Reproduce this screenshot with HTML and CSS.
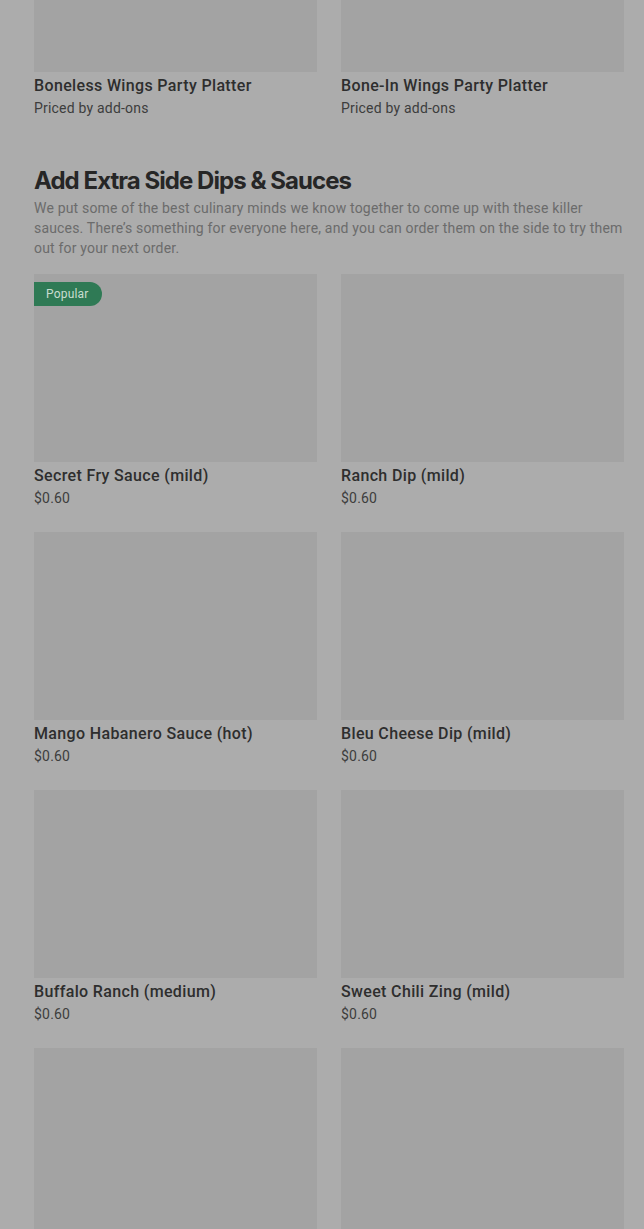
FILE: index.html
```html
<!DOCTYPE html>
<html lang="en">
<head>
<meta charset="utf-8">
<title>Menu</title>
<link rel="stylesheet" href="styles.css">
</head>
<body>
<main class="page">
  <section class="grid grid-top">
    <article class="card">
      <div class="thumb"></div>
      <h3 class="name">Boneless Wings Party Platter</h3>
      <p class="price">Priced by add-ons</p>
    </article>
    <article class="card">
      <div class="thumb"></div>
      <h3 class="name">Bone-In Wings Party Platter</h3>
      <p class="price">Priced by add-ons</p>
    </article>
  </section>

  <section class="category">
    <h2 class="cat-title">Add Extra Side Dips &amp; Sauces</h2>
    <p class="cat-desc">We put some of the best culinary minds we know together to come up with these killer sauces. There’s something for everyone here, and you can order them on the side to try them out for your next order.</p>
    <div class="grid">
      <article class="card">
        <div class="thumb"><span class="badge">Popular</span></div>
        <h3 class="name">Secret Fry Sauce (mild)</h3>
        <p class="price">$0.60</p>
      </article>
      <article class="card">
        <div class="thumb"></div>
        <h3 class="name">Ranch Dip (mild)</h3>
        <p class="price">$0.60</p>
      </article>
      <article class="card">
        <div class="thumb"></div>
        <h3 class="name">Mango Habanero Sauce (hot)</h3>
        <p class="price">$0.60</p>
      </article>
      <article class="card">
        <div class="thumb"></div>
        <h3 class="name">Bleu Cheese Dip (mild)</h3>
        <p class="price">$0.60</p>
      </article>
      <article class="card">
        <div class="thumb"></div>
        <h3 class="name">Buffalo Ranch (medium)</h3>
        <p class="price">$0.60</p>
      </article>
      <article class="card">
        <div class="thumb"></div>
        <h3 class="name">Sweet Chili Zing (mild)</h3>
        <p class="price">$0.60</p>
      </article>
      <article class="card">
        <div class="thumb"></div>
      </article>
      <article class="card">
        <div class="thumb"></div>
      </article>
    </div>
  </section>
</main>
</body>
</html>
```

FILE: styles.css
```css
html, body {
  margin: 0;
  padding: 0;
  background: #acacac;
  overflow: hidden;
}
body {
  font-family: Roboto, "Liberation Sans", sans-serif;
  color: #2b2b2b;
}
.page {
  padding: 0 20px 0 34px;
}
.grid {
  display: grid;
  grid-template-columns: 1fr 1fr;
  column-gap: 24px;
  row-gap: 24px;
}
.grid-top {
  margin-top: -116px;
}
.card {
  display: flex;
  flex-direction: column;
}
.thumb {
  position: relative;
  height: 188px;
  background: #a3a3a3;
}
.badge {
  position: absolute;
  left: 0;
  top: 8px;
  height: 24px;
  padding: 0 13px 0 12px;
  line-height: 24px;
  font-size: 12px;
  letter-spacing: 0.2px;
  color: #c9ddd0;
  background: #2f7a55;
  border-radius: 0 12px 12px 0;
}
.name {
  margin: 2px 0 0;
  font-size: 16px;
  line-height: 24px;
  font-weight: 500;
  letter-spacing: 0.35px;
  color: #2e2e2e;
}
.price {
  margin: 0;
  font-size: 14px;
  line-height: 20px;
  letter-spacing: 0.2px;
  color: #3d3d3d;
}
.category {
  margin-top: 47px;
}
.cat-title {
  margin: 0;
  font-family: Inter, "Liberation Sans", sans-serif;
  font-size: 24px;
  line-height: 32px;
  font-weight: 700;
  letter-spacing: -0.95px;
  color: #262626;
}
.cat-desc {
  margin: 1px 0 16px;
  font-size: 14px;
  line-height: 20px;
  letter-spacing: 0.18px;
  color: #6b6b6b;
}
```
